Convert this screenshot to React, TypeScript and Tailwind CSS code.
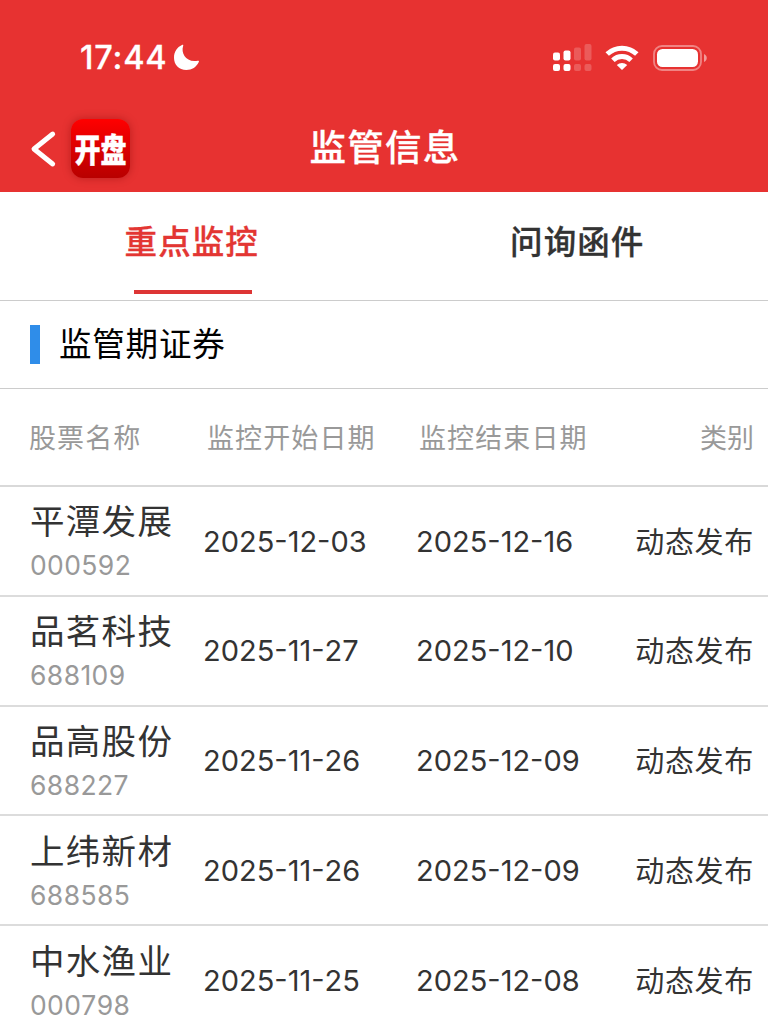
import { useState } from "react";

const tabs = ["重点监控", "问询函件"];

const stocks = [
  { name: "平潭发展", code: "000592", start: "2025-12-03", end: "2025-12-16", type: "动态发布" },
  { name: "品茗科技", code: "688109", start: "2025-11-27", end: "2025-12-10", type: "动态发布" },
  { name: "品高股份", code: "688227", start: "2025-11-26", end: "2025-12-09", type: "动态发布" },
  { name: "上纬新材", code: "688585", start: "2025-11-26", end: "2025-12-09", type: "动态发布" },
  { name: "中水渔业", code: "000798", start: "2025-11-25", end: "2025-12-08", type: "动态发布" },
];

function StatusBar() {
  return (
    <div className="flex h-[115px] items-center pl-[80px] pr-[61px]">
      <span className="w-[86px] pt-[1px] text-[32.500px] leading-none font-medium tracking-[0.8px] [-webkit-text-stroke:0.3px_white]">17:44</span>
      <svg className="ml-[7px] h-[27px] w-[27px]" viewBox="0 0 27 27" fill="currentColor">
        <path d="M9 1C9.900 .5 10.500 1 10.200 1.800C7.500 9.500 13.500 19 24.800 16.700C25.800 16.500 26.300 17.200 25.800 18C23.500 23 19 26 13.300 26C6 26 1 20.700 1 13.700C1 8 4 3 9 1Z" />
      </svg>
      <div className="ml-auto flex items-center">
        <svg className="h-[28px] w-[40px]" viewBox="0 0 40 28" fill="currentColor">
          <rect x="1" y="8.500" width="7" height="8" rx="2" />
          <rect x="11.500" y="6.500" width="7" height="10" rx="2" />
          <rect x="1" y="20" width="7" height="7" rx="2" />
          <rect x="11.500" y="20" width="7" height="7" rx="2" />
          <g opacity=".2">
            <rect x="22" y="3.500" width="7" height="13" rx="2" />
            <rect x="32.500" y="0" width="7" height="16.500" rx="2" />
            <rect x="22" y="20" width="7" height="7" rx="2" />
            <rect x="32.500" y="20" width="7" height="7" rx="2" />
          </g>
        </svg>
        <svg className="ml-[13px] h-[26px] w-[34px]" viewBox="0 0 34 26" fill="none" stroke="currentColor" strokeWidth="5">
          <path d="M2.200 9C10.500 1.200 23.500 1.200 31.800 9" />
          <path d="M7.900 15.200C13 10.300 21 10.300 26.100 15.200" />
          <path d="M17 25L11.800 20C14.800 17.200 19.200 17.200 22.200 20Z" fill="currentColor" stroke="none" />
        </svg>
        <svg className="ml-[14px] h-[26px] w-[54px]" viewBox="0 0 54 26">
          <rect x="1" y="1" width="47" height="24" rx="8" fill="none" stroke="currentColor" strokeWidth="1.800" opacity=".4" />
          <rect x="4" y="4" width="41" height="18" rx="5.500" fill="currentColor" />
          <path d="M51 9C54.700 10.500 54.700 15.500 51 17Z" fill="currentColor" opacity=".5" />
        </svg>
      </div>
    </div>
  );
}

function NavBar() {
  return (
    <div className="grid h-[77px] grid-cols-[1fr_auto_1fr] items-start">
      <div className="flex items-center pt-[4px] pl-[30px]">
        <svg className="h-[38px] w-[27px]" viewBox="0 0 27 38" fill="none" stroke="currentColor" strokeWidth="4.900" strokeLinecap="round" strokeLinejoin="round">
          <path d="M22.700 4L4 19L22.700 34" />
        </svg>
        <div className="ml-[14px] flex h-[59px] w-[59px] items-center justify-center rounded-[12px] bg-linear-to-b from-[#ff0000] to-[#b80000] shadow-[0_0_8px_rgba(120,0,0,0.4)]">
          <span className="origin-center translate-y-[1.500px] scale-y-125 text-[26px] leading-none font-black whitespace-nowrap [-webkit-text-stroke:0.3px_white]">开盘</span>
        </div>
      </div>
      <h1 className="pt-[6px] pl-[2px] text-[36.500px] leading-[54px] font-medium tracking-[1.300px] [-webkit-text-stroke:0.3px_white]">监管信息</h1>
    </div>
  );
}

export default function App() {
  const [active, setActive] = useState(0);

  return (
    <div className="h-[1028px] w-[768px] overflow-hidden bg-white font-[Inter,'Noto_Sans_CJK_SC',sans-serif] text-[#333]">
      <header className="h-[192px] bg-[#e73231] text-white">
        <StatusBar />
        <NavBar />
      </header>

      <nav className="flex h-[109px] border-b-[1.500px] border-[#ccc] pl-[1px]">
        {tabs.map((tab, i) => (
          <button
            key={tab}
            onClick={() => setActive(i)}
            className={`flex flex-1 flex-col items-center pt-[27px] text-[32.500px] leading-[48px] font-medium tracking-[1.100px] [-webkit-text-stroke:0.3px_currentColor] ${i === active ? "text-[#e33633]" : "pl-[4px] text-[#333]"}`}
          >
            {tab}
            {i === active && <span className="mt-[23px] ml-[2px] h-[4px] w-[118px] bg-[#dd3535]" />}
          </button>
        ))}
      </nav>

      <div className="flex h-[88px] items-center border-b-[1.500px] border-[#ccc] pl-[30px]">
        <span className="h-[39px] w-[10px] bg-[#2f8de9]" />
        <h2 className="ml-[19px] pt-[2px] text-[32.500px] leading-none tracking-[0.800px] text-black">监管期证券</h2>
      </div>

      <div className="grid h-[98px] grid-cols-[207px_212px_1fr_auto] items-center border-b-2 border-[#d9d9d9] pt-[4px] pr-[14px] text-[27px] tracking-[1.100px] text-[#999]">
        <span className="pl-[29px]">股票名称</span>
        <span>监控开始日期</span>
        <span>监控结束日期</span>
        <span className="tracking-normal">类别</span>
      </div>

      <ul className="[font-kerning:none]">
        {stocks.map((s) => (
          <li key={s.code} className="grid h-[109.800px] grid-cols-[203px_213px_1fr_auto] items-center border-b-2 border-[#dcdcdc] pr-[14px] text-[29px]">
            <div className="pl-[30px]">
              <div className="text-[34.500px] leading-[50px] tracking-[1.300px]">{s.name}</div>
              <div className="text-[26.500px] leading-[37px] tracking-[0.4px] text-[#999]">{s.code}</div>
            </div>
            <span className="pt-[1px]">{s.start}</span>
            <span className="pt-[1px]">{s.end}</span>
            <span className="pt-[3px] tracking-[0.700px]">{s.type}</span>
          </li>
        ))}
      </ul>
    </div>
  );
}
